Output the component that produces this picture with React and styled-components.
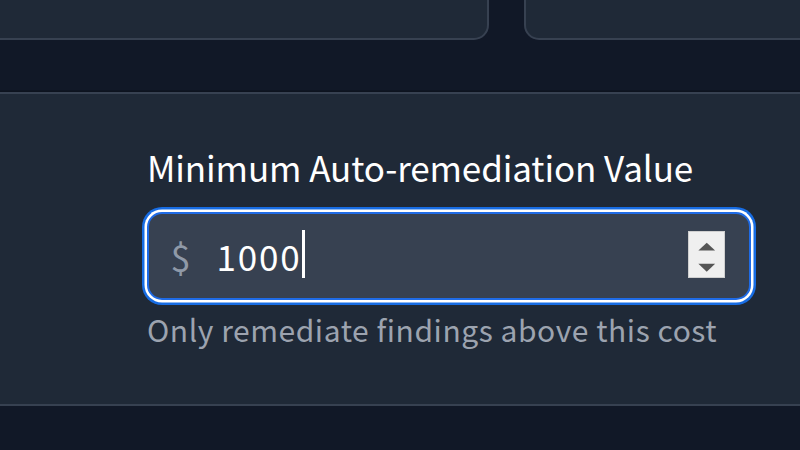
import React from "react";
import styled, { createGlobalStyle } from "styled-components";

const GlobalStyle = createGlobalStyle`
  html, body { margin: 0; padding: 0; background: #111827; }
  body { font-family: "Noto Sans CJK JP", "Noto Sans", sans-serif; -webkit-font-smoothing: antialiased; }
`;

const Page = styled.div`
  width: 800px;
  height: 450px;
  overflow: hidden;
  background: #111827;
`;

const CardsRow = styled.div`
  display: grid;
  grid-template-columns: 509px 1fr;
  gap: 35px;
  margin: -60px -20px 0 -20px;
`;

const Card = styled.div`
  height: 100px;
  box-sizing: border-box;
  background: #1f2937;
  border: 2.5px solid #374151;
  border-radius: 15px;
`;

const Section = styled.section`
  margin-top: 52px;
  background: #1f2937;
  border-top: 2.5px solid #374151;
  border-bottom: 2.5px solid #374151;
  box-shadow: 0 -1.5px 0 #0d131f;
  padding: 48px 0 55px 147px;
`;

const Label = styled.label`
  display: block;
  color: #ffffff;
  font-size: 35px;
  line-height: 50px;
  font-weight: 400;
  letter-spacing: -0.1px;
  margin-bottom: 20px;
`;

const Field = styled.div`
  box-sizing: border-box;
  width: 604px;
  height: 87.5px;
  display: flex;
  align-items: center;
  background: #374151;
  border: 2.5px solid #1f6be6;
  border-radius: 15px;
  box-shadow: 0 0 0 2.5px #ffffff, 0 0 0 5px #176ce3;
`;

const Prefix = styled.span`
  width: 46px;
  margin-left: 21.5px;
  color: #8f99a8;
  font-size: 36px;
  line-height: 50px;
`;

const Value = styled.span`
  color: #ffffff;
  font-size: 35px;
  line-height: 50px;
  letter-spacing: 1.8px;
`;

const Caret = styled.span`
  width: 2.5px;
  height: 48px;
  margin-left: 1px;
  margin-top: -4px;
  background: #ffffff;
`;

const Spinner = styled.div`
  margin-left: auto;
  margin-right: 24px;
  margin-top: -3px;
  width: 37.5px;
  height: 47.5px;
  box-sizing: border-box;
  background: #efefef;
  border: 1px solid #cfcfcf;
  display: flex;
  align-items: center;
  justify-content: center;
`;

const Help = styled.p`
  margin: 9px 0 0 0;
  color: #9ca3af;
  font-size: 30px;
  line-height: 40px;
  letter-spacing: 0.55px;
`;

function SpinArrows() {
  return (
    <svg width="36" height="46" viewBox="0 0 36 46" aria-hidden="true">
      <polygon points="9.5,19.5 26.5,19.5 18,11.5" fill="#555555" />
      <polygon points="9.5,33 26.5,33 18,41" fill="#555555" />
    </svg>
  );
}

export default function App() {
  return (
    <Page>
      <GlobalStyle />
      <CardsRow>
        <Card />
        <Card />
      </CardsRow>
      <Section>
        <Label>Minimum Auto-remediation Value</Label>
        <Field>
          <Prefix>$</Prefix>
          <Value>1000</Value>
          <Caret />
          <Spinner>
            <SpinArrows />
          </Spinner>
        </Field>
        <Help>Only remediate findings above this cost</Help>
      </Section>
    </Page>
  );
}
